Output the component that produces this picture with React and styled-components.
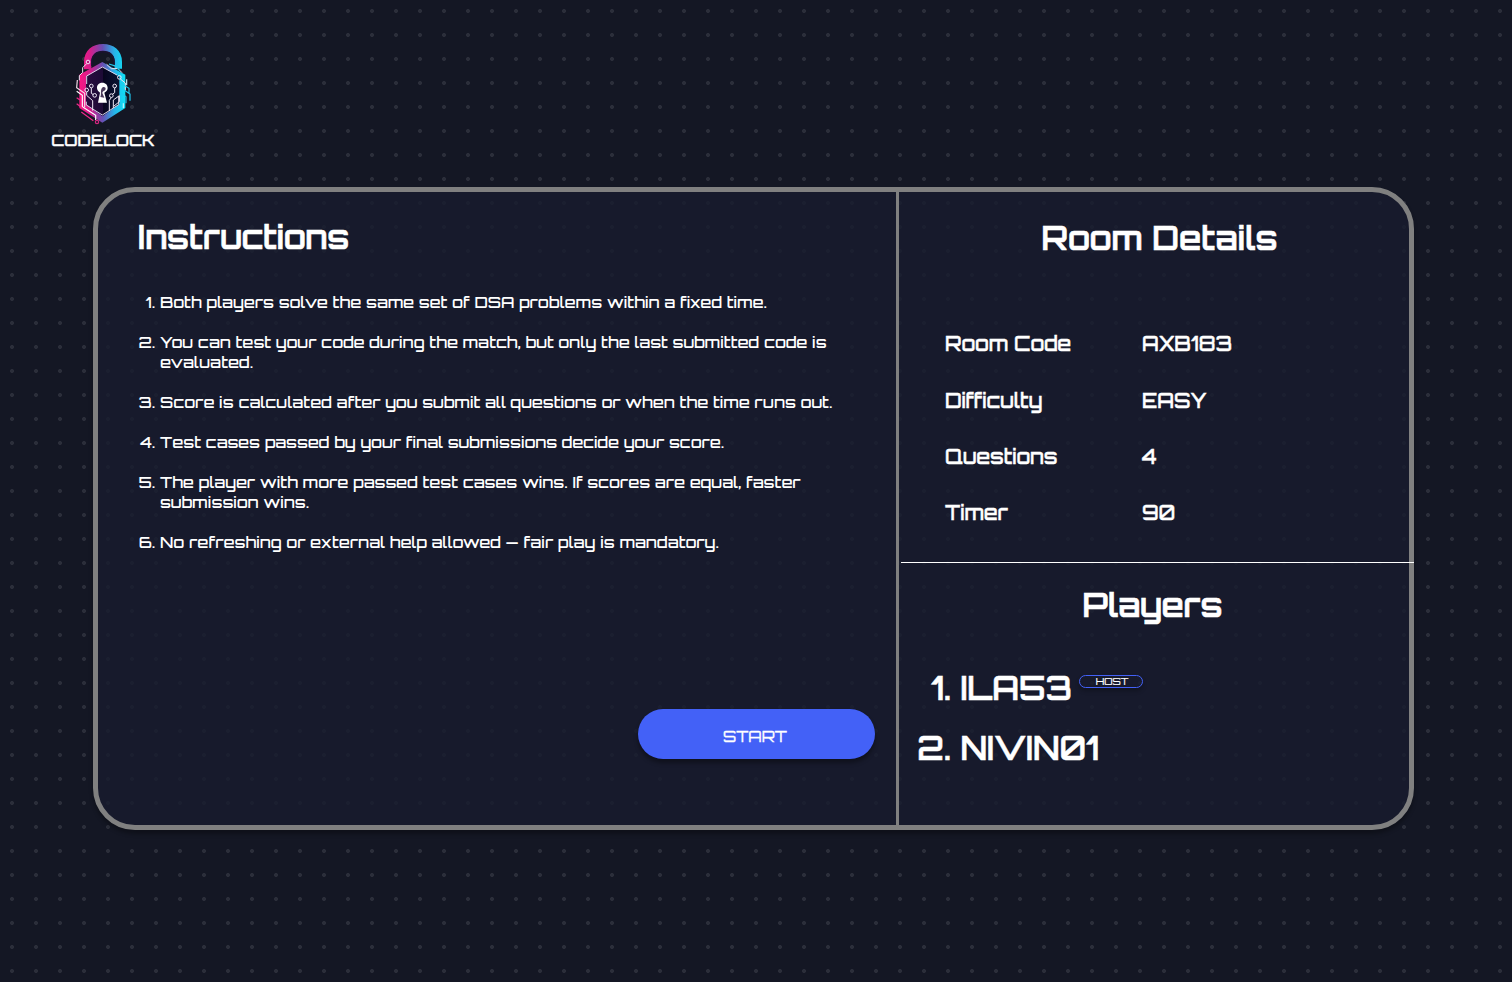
import React from "react";
import styled, { createGlobalStyle } from "styled-components";

const GlobalStyle = createGlobalStyle`
  *, *::before, *::after { box-sizing: border-box; }
  body {
    margin: 0;
    background: #141724;
    color: #fff;
    font-family: "Orbitron", "DejaVu Sans", sans-serif;
    font-size: 16px;
    font-weight: 500;
    line-height: 20px;
  }
  h1, ol, dl, dt, dd, p { margin: 0; padding: 0; }
`;

const Page = styled.div`
  width: 1512px;
  height: 982px;
  overflow: hidden;
  background-color: #141724;
  background-image: radial-gradient(circle at 12px 11px, #2b2e3a 1.6px, transparent 2.3px);
  background-size: 24px 24px;
`;

const Header = styled.header`
  height: 187px;
  padding: 40px 0 0 51px;
`;

const Brand = styled.div`
  width: 104px;
  display: flex;
  flex-direction: column;
  align-items: center;
  gap: 2px;
`;

const BrandName = styled.p`
  font-weight: 500;
  -webkit-text-stroke: 0.35px #fff;
`;

const Panel = styled.main`
  width: 1321px;
  height: 643px;
  margin-left: 93px;
  display: grid;
  grid-template-columns: 801px 1fr;
  border: 5px solid #808080;
  border-radius: 42px;
  background: rgba(24, 27, 46, 0.8);
  box-shadow: 0 4px 4px rgba(0, 0, 0, 0.3);
`;

const Instructions = styled.section`
  display: flex;
  flex-direction: column;
  border-right: 3px solid #808080;
  padding: 25px 21px 66px 39px;
`;

const Title = styled.h1`
  font-size: 32px;
  font-weight: 600;
  line-height: 40px;
  -webkit-text-stroke: 0.6px #fff;
  text-align: ${(p) => p.$align || "left"};
`;

const InstructionsTitle = styled(Title)`
  padding-left: 1px;
`;

const Rules = styled.ol`
  display: flex;
  flex-direction: column;
  gap: 20px;
  margin-top: 35px;
  padding-left: 23px;
`;

const Rule = styled.li`
  width: 690px;
`;

const StartButton = styled.button`
  width: 237px;
  height: 50px;
  margin-top: auto;
  align-self: flex-end;
  padding: 3px 3px 0 0;
  border: 0;
  border-radius: 25px;
  background: #4361f7;
  color: #fff;
  font: inherit;
  font-weight: 400;
  -webkit-text-stroke: 0.3px #fff;
  box-shadow: 0 4px 4px rgba(0, 0, 0, 0.35);
`;

const Side = styled.div`
  display: flex;
  flex-direction: column;
`;

const Room = styled.section`
  height: 370px;
  padding-top: 26px;
`;

const RoomTitle = styled(Title)`
  padding-left: 11px;
`;

const Details = styled.dl`
  display: flex;
  flex-direction: column;
  gap: 31.3px;
  margin-top: 73.3px;
  padding-left: 46px;
  font-size: 20px;
  line-height: 25px;
  -webkit-text-stroke: 0.35px #fff;
`;

const Detail = styled.div`
  display: grid;
  grid-template-columns: 197px 1fr;
`;

const Separator = styled.hr`
  height: 1px;
  margin: 0 -5px 0 2px;
  border: 0;
  background: #fff;
`;

const Players = styled.section`
  padding-top: 22px;
`;

const PlayersTitle = styled(Title)`
  padding-right: 3px;
`;

const PlayerList = styled.ol`
  display: flex;
  flex-direction: column;
  gap: 20px;
  margin-top: 43px;
  padding-left: 61.5px;
  font-size: 32px;
  font-weight: 600;
  line-height: 40px;
  -webkit-text-stroke: 0.5px #fff;
`;

const HostBadge = styled.span`
  width: 64px;
  height: 13px;
  margin: 7px 0 0 6.5px;
  display: inline-flex;
  justify-content: center;
  vertical-align: top;
  padding-left: 3px;
  border: 1px solid #4361f7;
  border-radius: 7px;
  font-size: 10px;
  font-weight: 400;
  line-height: 11px;
  -webkit-text-stroke: 0.2px #fff;
  box-shadow: 0 3px 4px rgba(0, 0, 0, 0.25);
`;

const rules = [
  "Both players solve the same set of DSA problems within a fixed time.",
  "You can test your code during the match, but only the last submitted code is evaluated.",
  "Score is calculated after you submit all questions or when the time runs out.",
  "Test cases passed by your final submissions decide your score.",
  "The player with more passed test cases wins. If scores are equal, faster submission wins.",
  "No refreshing or external help allowed — fair play is mandatory.",
];

const details = [
  ["Room Code", "AXB183"],
  ["Difficulty", "EASY"],
  ["Questions", "4"],
  ["Timer", "90"],
];

const players = [
  { name: "ILA53", host: true },
  { name: "NIVIN01", host: false },
];

function LockLogo() {
  return (
    <svg width="66" height="88" viewBox="0 0 198 264" fill="none">
      <defs>
        <linearGradient id="neon" gradientUnits="userSpaceOnUse" x1="26" y1="0" x2="170" y2="0">
          <stop offset="0" stopColor="#ff1683" />
          <stop offset="0.25" stopColor="#d21f8d" />
          <stop offset="0.5" stopColor="#6750b4" />
          <stop offset="0.75" stopColor="#26b5ea" />
          <stop offset="1" stopColor="#0ce6f5" />
        </linearGradient>
        <linearGradient id="core" x1="0" x2="1">
          <stop offset="0" stopColor="#2a0d3f" />
          <stop offset="0.5" stopColor="#1d0a36" />
          <stop offset="0.5" stopColor="#08041e" />
          <stop offset="1" stopColor="#0a1532" />
        </linearGradient>
      </defs>
      <path d="M53 88V66C53 38 73 23 99 23s46 15 46 43v20" stroke="url(#neon)" strokeWidth="22" />
      <path d="M66 78V66c0-20 13-31 33-31s33 11 33 31v8" stroke="#1b1231" strokeWidth="5" />
      <path d="M97 66l69 38v100l-69 44-69-44V104z" fill="url(#neon)" />
      <path d="M97 80l51 30v82l-51 37-49-37v-82z" fill="url(#core)" />
      <path d="M50 132v-24l47-27 44 24" stroke="#d9d3e8" strokeWidth="3" />
      <path d="M97 225l-48-30v-10M97 225l49-31v-26" stroke="#d9d3e8" strokeWidth="3" />
      <g stroke="#eee8f5" strokeWidth="3">
        <circle cx="54" cy="66" r="5.5" fill="#b61b7d" />
        <circle cx="64" cy="138" r="5.5" />
        <circle cx="50" cy="150" r="5.5" />
        <circle cx="74" cy="166" r="5.5" />
        <circle cx="134" cy="138" r="5.5" />
        <circle cx="124" cy="167" r="5.5" />
        <circle cx="148" cy="112" r="5.5" />
        <path d="M50 71L38 83v14L28 107v14" />
        <path d="M64 144v16l6 4M50 156v10l18 16v30M134 144v14l-7 5M124 173l-6 8v32" />
        <path d="M130 204v-24l18-13v18l-16 13" />
        <path d="M110 73l14 13h20l12 12M151 117l15 12v22" />
      </g>
      <g strokeWidth="3.5">
        <path d="M22 120l-2 23 24 17v42" stroke="#f5ddea" />
        <path d="M20 154l17 12v34l40 26v14" stroke="#fff" />
        <path d="M20 173l10 7M20 191l17 13M34 216l36 26" stroke="#f02b8c" />
        <circle cx="81" cy="246" r="5" stroke="#d3267f" />
        <path d="M152 130l25 15v14M154 144l26 18v20M156 160l12 10v20M117 72l22 7 10 14" stroke="#22c9ef" />
        <path d="M170 118v18M160 190v14" stroke="#bff6ff" />
      </g>
      <path d="M97 128c-11 0-17 8-16 17 1 7 5 10 9 13l-6 30h27l-8-30c6-3 10-8 10-14 0-9-6-16-16-16z" fill="#fff" />
      <path d="M98 142c5-2 9 0 9 5-2 7-9 5-10 12l6 14-12-2c5-8-2-21 7-29z" fill="#4b3a5c" />
    </svg>
  );
}

export default function App() {
  return (
    <Page>
      <GlobalStyle />
      <Header>
        <Brand>
          <LockLogo />
          <BrandName>CODELOCK</BrandName>
        </Brand>
      </Header>
      <Panel>
        <Instructions>
          <InstructionsTitle>Instructions</InstructionsTitle>
          <Rules>
            {rules.map((text) => (
              <Rule key={text}>{text}</Rule>
            ))}
          </Rules>
          <StartButton>START</StartButton>
        </Instructions>
        <Side>
          <Room>
            <RoomTitle $align="center">Room Details</RoomTitle>
            <Details>
              {details.map(([label, value]) => (
                <Detail key={label}>
                  <dt>{label}</dt>
                  <dd>{value}</dd>
                </Detail>
              ))}
            </Details>
          </Room>
          <Separator />
          <Players>
            <PlayersTitle $align="center">Players</PlayersTitle>
            <PlayerList>
              {players.map((player) => (
                <li key={player.name}>
                  {player.name}
                  {player.host && <HostBadge>HOST</HostBadge>}
                </li>
              ))}
            </PlayerList>
          </Players>
        </Side>
      </Panel>
    </Page>
  );
}
